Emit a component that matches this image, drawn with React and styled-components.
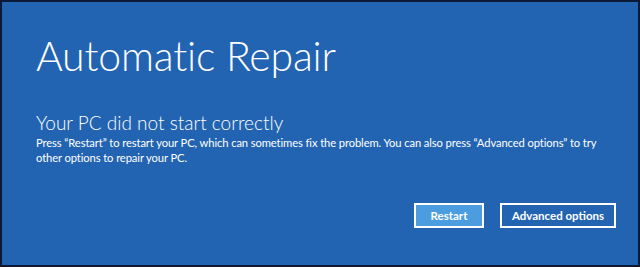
import styled, { createGlobalStyle } from "styled-components";

const GlobalStyle = createGlobalStyle`
  html, body {
    margin: 0;
    padding: 0;
    background: #0c1a38;
  }
  * {
    box-sizing: border-box;
  }
`;

const Screen = styled.div`
  width: 640px;
  height: 267px;
  background-color: #2264b2;
  border: 2px solid #0c1a38;
  color: #ffffff;
  font-family: "Lato", "Open Sans", sans-serif;
  display: flex;
  flex-direction: column;
  padding: 28px 22px 0 34px;
`;

const Title = styled.h1`
  margin: 0;
  font-size: 41px;
  font-weight: 300;
  line-height: 52px;
  letter-spacing: -0.2px;
`;

const Subtitle = styled.h2`
  margin: 0;
  margin-top: 28px;
  font-size: 19px;
  font-weight: 300;
  line-height: 25px;
`;

const Message = styled.p`
  margin: 0;
  font-size: 11.2px;
  line-height: 15px;
  max-width: 575px;
  letter-spacing: -0.1px;
`;

const ButtonRow = styled.div`
  display: flex;
  justify-content: flex-end;
  gap: 16px;
  margin-top: 38px;
`;

const Button = styled.button`
  height: 25px;
  padding: 0;
  width: ${(p) => p.$width}px;
  border: 2px solid #ffffff;
  background-color: ${(p) => (p.$primary ? "#4c9ddf" : "#2264b2")};
  color: #ffffff;
  font-family: "Lato", "Liberation Sans", sans-serif;
  font-weight: 700;
  font-size: 11.5px;
  cursor: pointer;
`;

export default function App() {
  return (
    <>
      <GlobalStyle />
      <Screen>
        <Title>Automatic Repair</Title>
        <Subtitle>Your PC did not start correctly</Subtitle>
        <Message>
          Press “Restart” to restart your PC, which can sometimes fix the
          problem. You can also press “Advanced options” to try other options
          to repair your PC.
        </Message>
        <ButtonRow>
          <Button $primary $width={70}>
            Restart
          </Button>
          <Button $width={116}>Advanced options</Button>
        </ButtonRow>
      </Screen>
    </>
  );
}
